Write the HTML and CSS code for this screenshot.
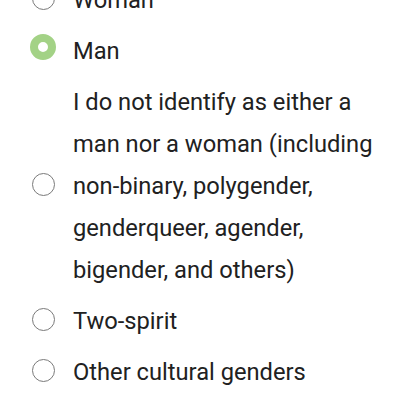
FILE: index.html
```html
<!DOCTYPE html>
<html>
<head>
<meta charset="utf-8">
<link rel="stylesheet" href="styles.css">
</head>
<body>
<ul class="options">
  <li class="option"><span class="radio"></span><span class="label">Woman</span></li>
  <li class="option"><span class="radio checked"></span><span class="label">Man</span></li>
  <li class="option"><span class="radio"></span><span class="label">I do not identify as either a man nor a woman (including non-binary, polygender, genderqueer, agender, bigender, and others)</span></li>
  <li class="option"><span class="radio"></span><span class="label">Two-spirit</span></li>
  <li class="option"><span class="radio"></span><span class="label">Other cultural genders</span></li>
</ul>
</body>
</html>
```
FILE: styles.css
```css
html, body {
  margin: 0;
  padding: 0;
  background: #ffffff;
}
body {
  width: 400px;
  height: 400px;
  overflow: hidden;
  font-family: Roboto, "Noto Sans", sans-serif;
}
.options {
  list-style: none;
  margin: -21px 0 0 0;
  padding: 0 12px 0 32px;
  display: flex;
  flex-direction: column;
  gap: 9px;
}
.option {
  display: flex;
  align-items: center;
  gap: 18px;
}
.radio {
  flex: none;
  width: 23px;
  height: 23px;
  margin-bottom: 3px;
  box-sizing: border-box;
  border-radius: 50%;
  border: 1.5px solid #7a7a7a;
  background: #fff;
}
.radio.checked {
  width: 26px;
  height: 26px;
  margin-left: -2px;
  margin-right: -1px;
  margin-bottom: 8px;
  border: 8.5px solid #a3d286;
}
.label {
  font-size: 23.7px;
  line-height: 42px;
  color: #212121;
}
```
